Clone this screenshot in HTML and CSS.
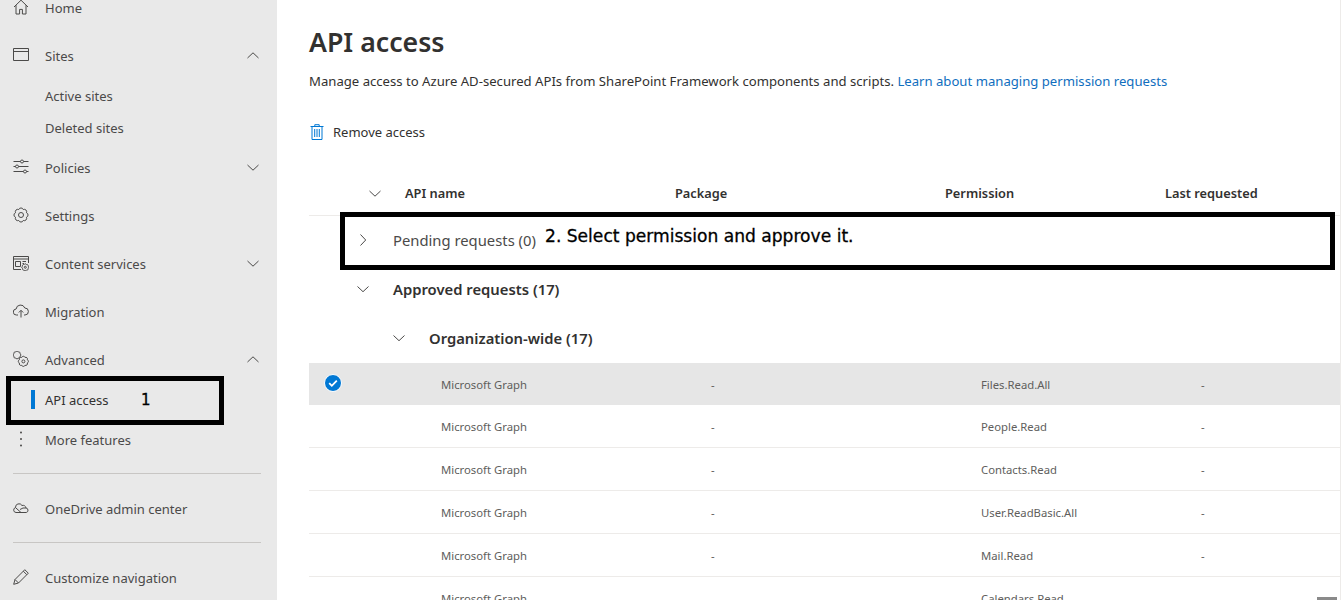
FILE: index.html
```html
<!DOCTYPE html>
<html lang="en">
<head>
    <meta charset="UTF-8">
    <meta name="viewport" content="width=device-width, initial-scale=1.0">
    <title>API access</title>
    <link rel="stylesheet" href="styles.css">
</head>
<body>
    <svg class="defs" width="0" height="0">
        <defs>
            <path id="gear" d="M10.26 2.55A2.400 2.400 0 0 1 13.45 5.740 2.400 2.400 0 0 1 13.45 10.260 2.400 2.400 0 0 1 10.26 13.450 2.400 2.400 0 0 1 5.740 13.450 2.400 2.400 0 0 1 2.550 10.260 2.400 2.400 0 0 1 2.550 5.740 2.400 2.400 0 0 1 5.740 2.550 2.400 2.400 0 0 1 10.26 2.550Z" vector-effect="non-scaling-stroke"/>
        </defs>
    </svg>
    <div class="page">
        <!-- Left navigation -->
        <nav class="sidebar">
            <div class="nav-item">
                <svg class="nav-icon" viewBox="0 0 16 16"><path d="M1 8 8 1.200 15 8M3 6.200V15h3.600v-4.600h2.800V15H13V6.200"/></svg>
                <span>Home</span>
            </div>
            <div class="nav-item">
                <svg class="nav-icon" viewBox="0 0 16 16"><path d="M.5 1.500h15v12H.5zM.5 4.500h15"/></svg>
                <span>Sites</span>
                <svg class="chevron" viewBox="0 0 12 7"><path d="M.5 6 6 .8 11.500 6"/></svg>
            </div>
            <div class="nav-sub">Active sites</div>
            <div class="nav-sub">Deleted sites</div>
            <div class="nav-item">
                <svg class="nav-icon" viewBox="0 0 16 16"><path d="M.5 2.500h7M10.500 2.500h5M.5 7.500h2M5.500 7.500h10M.5 12.500h10M13.500 12.500h2"/><circle cx="9" cy="2.500" r="1.500"/><circle cx="4" cy="7.500" r="1.500"/><circle cx="12" cy="12.500" r="1.500"/></svg>
                <span>Policies</span>
                <svg class="chevron" viewBox="0 0 12 7"><path d="M.5 1 6 6.200 11.500 1"/></svg>
            </div>
            <div class="nav-item">
                <svg class="nav-icon" viewBox="0 0 16 16"><circle cx="8" cy="8" r="2.500"/><use href="#gear"/></svg>
                <span>Settings</span>
            </div>
            <div class="nav-item">
                <svg class="nav-icon" viewBox="0 0 16 16"><path d="M8 14.500H.5v-13h15V8M.5 4h15M2.500 6.500h5v5h-5zM9.500 6.500h3.500M9.500 8.500h1.500"/><use href="#gear" transform="translate(8.300 8.300) scale(.5)"/><circle cx="12.300" cy="12.300" r="1"/></svg>
                <span>Content services</span>
                <svg class="chevron" viewBox="0 0 12 7"><path d="M.5 1 6 6.200 11.500 1"/></svg>
            </div>
            <div class="nav-item">
                <svg class="nav-icon" viewBox="0 0 16 16"><path d="M5 12H3.500a3 3 0 0 1-.4-6A4.500 4.500 0 0 1 11.800 5a3.500 3.500 0 0 1 .2 7h-1M8 14.500V7.500M5.800 9.500 8 7.300l2.200 2.200"/></svg>
                <span>Migration</span>
            </div>
            <div class="nav-item">
                <svg class="nav-icon" viewBox="0 0 16 16"><use href="#gear" transform="translate(-.4 -.4) scale(.55)"/><use href="#gear" transform="translate(4.600 4.600) scale(.72)"/><circle cx="10.400" cy="10.400" r="1.500"/></svg>
                <span>Advanced</span>
                <svg class="chevron" viewBox="0 0 12 7"><path d="M.5 6 6 .8 11.500 6"/></svg>
            </div>
            <div class="nav-sub nav-sub-active">API access</div>
            <div class="nav-item">
                <svg class="nav-icon dots" viewBox="0 0 16 16"><circle cx="8" cy="1.500" r="1"/><circle cx="8" cy="8" r="1"/><circle cx="8" cy="14.500" r="1"/></svg>
                <span>More features</span>
            </div>
            <hr class="nav-rule">
            <div class="nav-item">
                <svg class="nav-icon" viewBox="0 0 16 16"><path d="M3 12.500a2.500 2.500 0 0 1-.5-4.900A3.500 3.500 0 0 1 9 5.500 3 3 0 0 1 13 8a2.300 2.300 0 0 1 .3 4.500zM2.500 7.600 8 12.500M7 9.500 10 8h3"/></svg>
                <span>OneDrive admin center</span>
            </div>
            <hr class="nav-rule">
            <div class="nav-item">
                <svg class="nav-icon" viewBox="0 0 16 16"><path d="M.7 15.300 2 10.500 11.800 .7l3.500 3.500L5.500 14zM2 10.500 5.500 14M10.300 2.200l3.500 3.500"/></svg>
                <span>Customize navigation</span>
            </div>
        </nav>

        <!-- Main content -->
        <main class="content">
            <h1>API access</h1>
            <p class="intro">Manage access to Azure AD-secured APIs from SharePoint Framework components and scripts. <a href="#">Learn about managing permission requests</a></p>

            <div class="toolbar">
                <svg class="trash" viewBox="0 0 14 16"><path d="M.5 2.500h13M2 2.500v13h10v-13M4.800 2.500V.7h4.400v1.800M4.700 5v8M7 5v8M9.300 5v8"/></svg>
                <span>Remove access</span>
            </div>

            <div class="table-head">
                <svg class="toggle" viewBox="0 0 12 7"><path d="M.5 1 6 6.200 11.500 1"/></svg>
                <span>API name</span>
                <span>Package</span>
                <span>Permission</span>
                <span>Last requested</span>
            </div>

            <div class="group">
                <svg class="group-toggle" viewBox="0 0 7 12"><path d="M1 .5 6.200 6 1 11.500"/></svg>
                <span>Pending requests (0)</span>
            </div>
            <div class="group group-bold">
                <svg class="group-toggle" viewBox="0 0 12 7"><path d="M.5 1 6 6.200 11.500 1"/></svg>
                <span>Approved requests (17)</span>
            </div>
            <div class="group group-bold group-nested">
                <svg class="group-toggle" viewBox="0 0 12 7"><path d="M.5 1 6 6.200 11.500 1"/></svg>
                <span>Organization-wide (17)</span>
            </div>

            <div class="row row-selected">
                <svg class="check" viewBox="0 0 18 18"><circle cx="9" cy="9" r="8.500"/><path d="M5.200 9.200 7.800 11.800 12.800 6.600"/></svg>
                <span>Microsoft Graph</span><span>-</span><span>Files.Read.All</span><span>-</span>
            </div>
            <div class="row"><span>Microsoft Graph</span><span>-</span><span>People.Read</span><span>-</span></div>
            <div class="row"><span>Microsoft Graph</span><span>-</span><span>Contacts.Read</span><span>-</span></div>
            <div class="row"><span>Microsoft Graph</span><span>-</span><span>User.ReadBasic.All</span><span>-</span></div>
            <div class="row"><span>Microsoft Graph</span><span>-</span><span>Mail.Read</span><span>-</span></div>
            <div class="row"><span>Microsoft Graph</span><span>-</span><span>Calendars.Read</span><span>-</span></div>
        </main>
    </div>

    <!-- Annotations drawn over the screenshot -->
    <div class="callout callout-one"><span>1</span></div>
    <div class="callout callout-two"><span>2. Select permission and approve it.</span></div>
    <div class="scroll-thumb"></div>
</body>
</html>
```

FILE: styles.css
```css
html, body {
    margin: 0;
    height: 600px;
    overflow: hidden;
}
body {
    position: relative;
    background-color: #ffffff;
    color: #323130;
    font-family: "Noto Sans", "Open Sans", sans-serif;
    font-size: 13px;
}
.defs {
    position: absolute;
}
.page {
    display: flex;
    height: 600px;
    overflow: hidden;
}

/* sidebar */
.sidebar {
    width: 277px;
    flex: none;
    margin-top: -16px;
    padding: 0 16px 0 13px;
    box-sizing: border-box;
    background-color: #e9e9e9;
    color: #4b4a49;
}
.nav-item {
    display: flex;
    align-items: center;
    height: 48px;
}
.nav-item span {
    flex: 1;
}
.nav-icon {
    width: 16px;
    height: 16px;
    margin: 0 16px 2px 0;
    fill: none;
    stroke: #4b4a49;
    stroke-width: 1;
    flex: none;
}
.dots {
    fill: #4b4a49;
    stroke: none;
}
.chevron {
    width: 12px;
    height: 7px;
    margin: 0 2px 2px 0;
    fill: none;
    stroke: #4b4a49;
    stroke-width: 1;
}
.nav-sub {
    display: flex;
    align-items: center;
    height: 32px;
    padding-left: 32px;
}
.nav-sub-active {
    position: relative;
    color: #323130;
}
.nav-sub-active::before {
    content: "";
    position: absolute;
    left: 18px;
    top: 6px;
    width: 4px;
    height: 19px;
    background-color: #0078d4;
}
.nav-rule {
    height: 1px;
    margin: 9px 0 11px;
    border: none;
    background-color: #c8c6c4;
    width: 248px;
}

/* main */
.content {
    flex: 1;
    min-width: 0;
    padding-left: 32px;
    border-right: 1px solid #edebe9;
}
h1 {
    margin: 24px 0 0;
    height: 36px;
    line-height: 36px;
    font-size: 26.7px;
    font-weight: 600;
}
.intro {
    margin: 12px 0 0;
    height: 19px;
    line-height: 19px;
    font-size: 13.13px;
}
.intro a {
    color: #106ebe;
    text-decoration: none;
}
.toolbar {
    display: flex;
    align-items: center;
    gap: 9px;
    height: 32px;
    margin-top: 25px;
}
.trash {
    width: 14px;
    height: 16px;
    margin-left: 1px;
    fill: none;
    stroke: #0078d4;
    stroke-width: 1;
}
.table-head {
    display: grid;
    grid-template-columns: 96px 270px 270px 220px 1fr;
    align-items: center;
    height: 44px;
    margin-top: 23px;
    border-bottom: 1px solid #edebe9;
    font-size: 12.8px;
    font-weight: 600;
}
.toggle {
    width: 12px;
    height: 7px;
    margin-left: 60px;
    fill: none;
    stroke: #4b4a49;
}
.group {
    display: flex;
    align-items: center;
    height: 47px;
    padding: 0 0 2px 84px;
    font-size: 14.8px;
    color: #4b4a49;
    position: relative;
}
.group-bold {
    font-weight: 600;
    color: #323130;
}
.group-nested {
    padding-left: 120px;
}
.group-toggle {
    position: absolute;
    left: 48px;
    top: 18px;
    width: 12px;
    height: 12px;
    fill: none;
    stroke: #4b4a49;
}
.group-nested .group-toggle {
    left: 84px;
}
.row {
    position: relative;
    display: grid;
    grid-template-columns: 270px 270px 220px 1fr;
    align-items: center;
    height: 42px;
    padding-left: 132px;
    border-bottom: 1px solid #edebe9;
    font-size: 11.3px;
    color: #605e5c;
}
.row-selected {
    background-color: #e6e6e6;
    border-bottom: none;
}
.check {
    position: absolute;
    left: 15px;
    top: 11px;
    width: 18px;
    height: 18px;
}
.check circle {
    fill: #0078d4;
    stroke: #ffffff;
    stroke-width: 1;
}
.check path {
    fill: none;
    stroke: #ffffff;
    stroke-width: 1.8;
}

/* annotations */
.callout {
    position: absolute;
    box-sizing: border-box;
    border: 5px solid #000000;
    color: #000000;
    font-family: "DejaVu Sans", sans-serif;
    -webkit-text-stroke: 0.3px #000000;
}
.callout-one {
    left: 6px;
    top: 376px;
    width: 218px;
    height: 49px;
    font-size: 15px;
}
.callout-one span {
    position: absolute;
    left: 130px;
    top: 10px;
}
.callout-two {
    left: 340px;
    top: 212px;
    width: 995px;
    height: 58px;
    font-size: 17.1px;
}
.callout-two span {
    position: absolute;
    left: 200px;
    top: 9px;
}
.scroll-thumb {
    position: absolute;
    right: 4px;
    bottom: 0;
    width: 20px;
    height: 3px;
    background-color: #8a8a8a;
}
```
